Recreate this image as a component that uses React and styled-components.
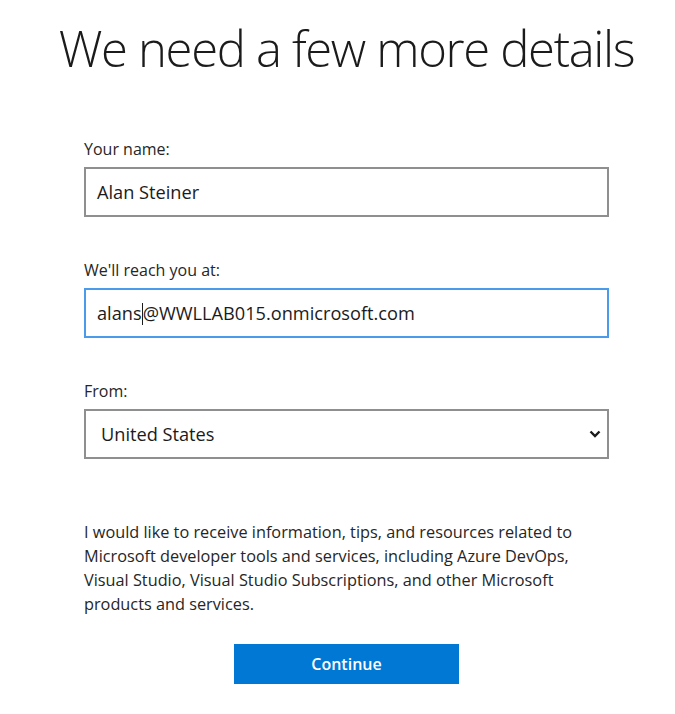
import React from "react";
import styled, { createGlobalStyle } from "styled-components";

const Global = createGlobalStyle`
  html, body { margin: 0; padding: 0; background: #fff; }
  body { font-family: "Open Sans", "Noto Sans", sans-serif; color: #1b1b1b; overflow: hidden; }
`;

const Page = styled.div`
  width: 657px;
  padding-left: 18px;
  display: flex;
  flex-direction: column;
  align-items: center;
`;

const Title = styled.h1`
  margin: 16px 0 0;
  font-weight: 300;
  font-size: 49px;
  line-height: 64px;
  color: #1b1b1b;
  white-space: nowrap;
  letter-spacing: -1.35px;
`;

const Form = styled.div`
  width: 525px;
  margin-top: 59px;
  display: flex;
  flex-direction: column;
`;

const Group = styled.div`
  display: flex;
  flex-direction: column;
  margin-bottom: ${(p) => (p.$last ? "0" : "43px")};
`;

const Label = styled.div`
  font-size: 16px;
  line-height: 20px;
  color: #262626;
  margin-bottom: 8px;
`;

const Field = styled.div`
  box-sizing: border-box;
  height: 50px;
  display: flex;
  align-items: center;
  justify-content: space-between;
  padding: ${(p) => (p.$select ? "0 6px 0 15px" : "0 11px")};
  border: ${(p) => (p.$focused ? "2px solid #4a9bea" : "2px solid #8f8f8f")};
  font-size: 18.2px;
  color: #1b1b1b;
`;

const Caret = styled.span`
  display: inline-block;
  width: 1px;
  height: 22px;
  background: #1b1b1b;
  vertical-align: -5px;
`;

const Para = styled.p`
  margin: 61px 0 0;
  max-width: 512px;
  font-size: 16.3px;
  line-height: 24px;
  color: #262626;
`;

const ButtonRow = styled.div`
  display: flex;
  justify-content: center;
  margin-top: 28px;
`;

const Button = styled.button`
  width: 225px;
  height: 40px;
  border: none;
  background: #0078d4;
  color: #fff;
  font-family: inherit;
  font-weight: 600;
  font-size: 16px;
  cursor: pointer;
`;

const Chevron = () => (
  <svg width="12" height="8" viewBox="0 0 12 8" aria-hidden="true">
    <path d="M1.5 1.5 L6 6 L10.5 1.5" fill="none" stroke="#1b1b1b" strokeWidth="2.4" />
  </svg>
);

export default function App() {
  return (
    <>
      <Global />
      <Page>
        <Title>We need a few more details</Title>
        <Form>
          <Group>
            <Label>Your name:</Label>
            <Field>Alan Steiner</Field>
          </Group>
          <Group>
            <Label>We'll reach you at:</Label>
            <Field $focused>
              <span>
                alans<Caret />@WWLLAB015.onmicrosoft.com
              </span>
            </Field>
          </Group>
          <Group $last>
            <Label>From:</Label>
            <Field $select>
              <span>United States</span>
              <Chevron />
            </Field>
          </Group>
          <Para>
            I would like to receive information, tips, and resources related to
            Microsoft developer tools and services, including Azure DevOps,
            Visual Studio, Visual Studio Subscriptions, and other Microsoft
            products and services.
          </Para>
          <ButtonRow>
            <Button>Continue</Button>
          </ButtonRow>
        </Form>
      </Page>
    </>
  );
}
